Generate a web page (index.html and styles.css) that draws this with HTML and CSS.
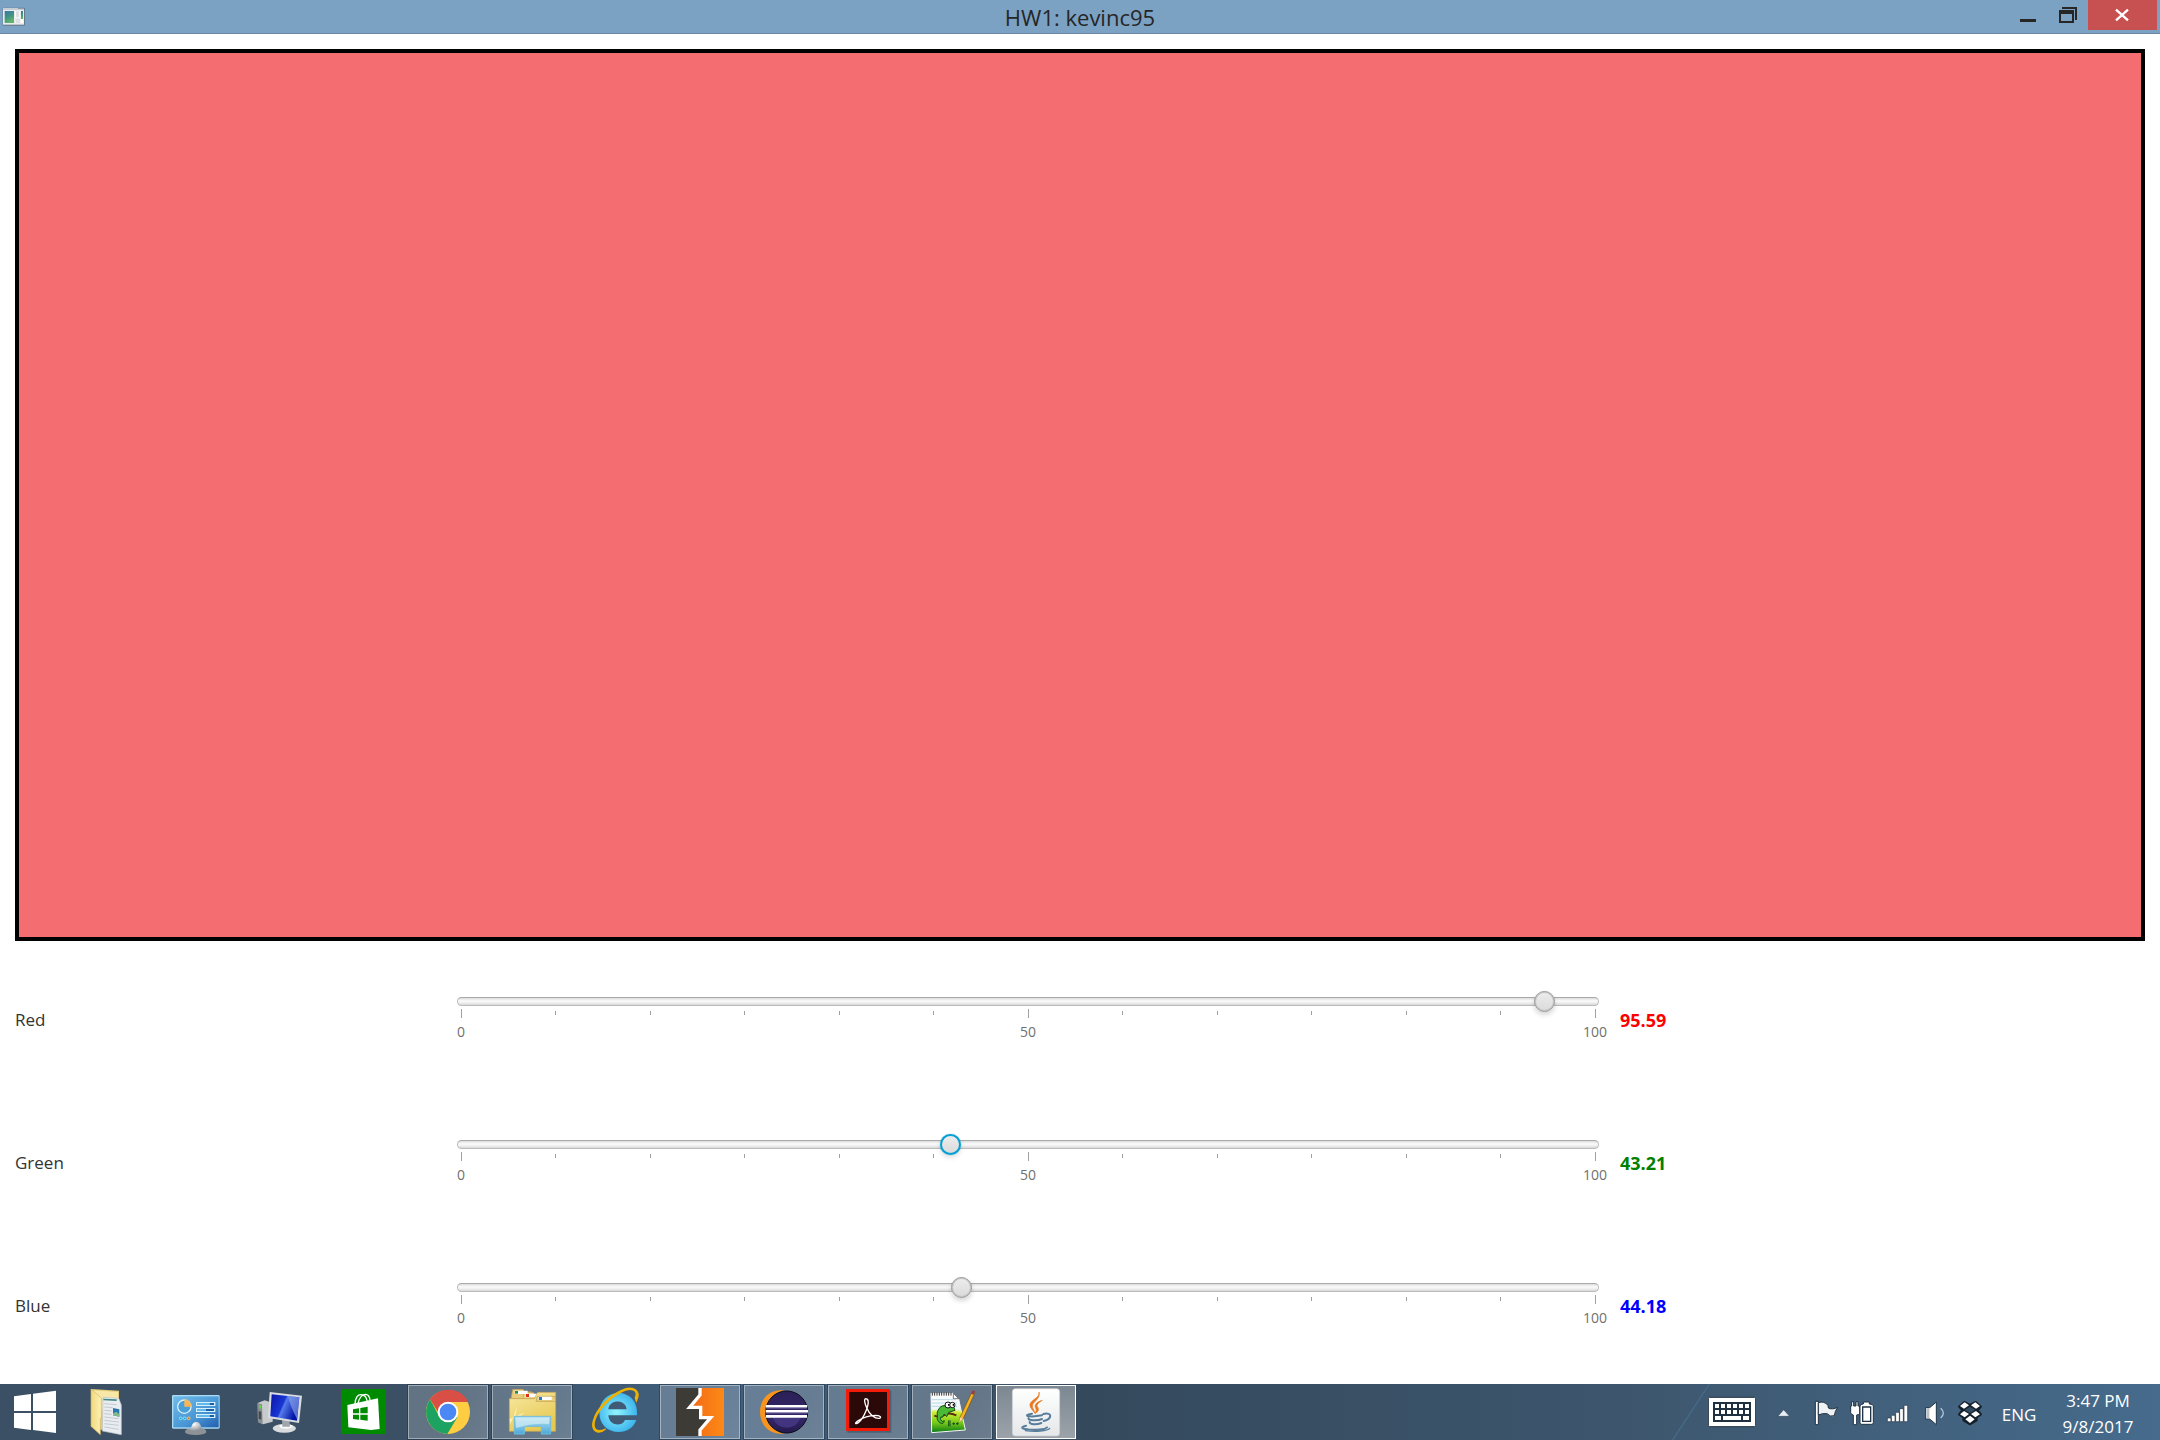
FILE: index.html
```html
<!DOCTYPE html>
<html lang="en">
<head>
<meta charset="utf-8">
<title>HW1: kevinc95</title>
<link rel="stylesheet" href="styles.css">
</head>
<body>
<header class="titlebar">
  <svg class="app-icon" viewBox="6 21 72 60" aria-hidden="true">
    <defs><linearGradient id="leaf" x1="0" y1="0" x2="0.4" y2="1"><stop offset="0" stop-color="#3f73a8"/><stop offset=".5" stop-color="#3f9285"/><stop offset="1" stop-color="#62b36b"/></linearGradient></defs>
    <rect x="8" y="23" width="67" height="54" rx="3" fill="#64788a"/>
    <rect x="9" y="24" width="63" height="50" fill="#e9ebec"/>
    <path d="M9 24h63v6H9z" fill="#c6ced5"/><path d="M54 24h18v3H54z" fill="#8c99a5"/>
    <path d="M14 33h28v36H14z" fill="url(#leaf)"/><path d="M63 33h6v24h-6z" fill="url(#leaf)"/>
    <path d="M45 33h15v21H45z" fill="#f8f8f8"/><path d="M48 57h11v12H48zM48 34h9v18h-9z" fill="#dedfe0"/><path d="M62 57h8v12h-8z" fill="#fff"/>
  </svg>
  <h1 class="title">HW1: kevinc95</h1>
  <div class="window-buttons">
    <button class="win-btn" type="button" aria-label="Minimize"><svg width="40" height="30" viewBox="87 0 120 90"><path d="M120 57h48v9h-48z" fill="#262626"/></svg></button>
    <button class="win-btn" type="button" aria-label="Restore"><svg width="39" height="30" viewBox="207 0 117 90"><path fill="#262626" fill-rule="evenodd" d="M237 30h45v39h-45zM243 42h33v21h-33zM246 21h45v39h-6V27h-39z"/></svg></button>
    <button class="win-btn win-close" type="button" aria-label="Close"><svg width="69" height="30" viewBox="324 0 207 90"><path d="M408 29l36 32M444 29l-36 32" stroke="#fff" stroke-width="7" fill="none"/></svg></button>
  </div>
</header>

<main class="content">
  <div class="swatch" role="img" aria-label="Mixed color"></div>
  <form class="channels">
    <div class="channel">
      <label class="name" for="red">Red</label>
      <div class="slider">
        <div class="rail"><input id="red" class="range" type="range" min="0" max="100" step="0.01" value="95.59"></div>
        <ul class="scale"><li class="major">0</li><li></li><li></li><li></li><li></li><li></li><li class="major">50</li><li></li><li></li><li></li><li></li><li></li><li class="major">100</li></ul>
      </div>
      <output class="value value-red" for="red">95.59</output>
    </div>
    <div class="channel">
      <label class="name" for="green">Green</label>
      <div class="slider">
        <div class="rail"><input id="green" class="range range-active" type="range" min="0" max="100" step="0.01" value="43.21"></div>
        <ul class="scale"><li class="major">0</li><li></li><li></li><li></li><li></li><li></li><li class="major">50</li><li></li><li></li><li></li><li></li><li></li><li class="major">100</li></ul>
      </div>
      <output class="value value-green" for="green">43.21</output>
    </div>
    <div class="channel">
      <label class="name" for="blue">Blue</label>
      <div class="slider">
        <div class="rail"><input id="blue" class="range" type="range" min="0" max="100" step="0.01" value="44.18"></div>
        <ul class="scale"><li class="major">0</li><li></li><li></li><li></li><li></li><li></li><li class="major">50</li><li></li><li></li><li></li><li></li><li></li><li class="major">100</li></ul>
      </div>
      <output class="value value-blue" for="blue">44.18</output>
    </div>
  </form>
</main>

<footer class="taskbar">
  <nav class="apps" aria-label="Applications">
    <button class="task start" type="button" aria-label="Start"><svg width="68" height="54" viewBox="0 27 204 162"><path fill="#fff" d="M42 61l51-7v51H42zM99 53l69-9v61H99zM42 111h51v51l-51-7zM99 111h69v60l-69-9z"/></svg></button>
    <button class="task" type="button" aria-label="Documents"><svg width="80" height="54" viewBox="216 27 240 162">
      <defs><linearGradient id="fold" x1="0" x2="1"><stop offset="0" stop-color="#f0d67c"/><stop offset="1" stop-color="#fff2b8"/></linearGradient></defs>
      <path d="M273 39l84 5v60l-50 58-34-10z" fill="#e4cb78"/><path d="M280 43l74 5v60h-46z" fill="#f8e8a8"/>
      <path d="M309 64l47 3 8 20v89l-57-11z" fill="#e9edf1" stroke="#b7bfc7" stroke-width="2"/>
      <path d="M310 68l40 2v5l-40-2z" fill="#3f8a83"/><path d="M313 83l37 3M313 93l25 2M313 103l22 2M313 113l22 2M313 123l43 5M313 133l43 5M313 143l43 5M313 153l43 7" stroke="#c3cad0" stroke-width="3"/>
      <path d="M339 96l19 4v22l-19-4z" fill="#2877b0"/><path d="M339 112l10-5 9 8v7l-19-4z" fill="#80b987"/>
      <path d="M273 39l31 27v57l-3 5v48l-28-25z" fill="url(#fold)" stroke="#d2b55d" stroke-width="2"/>
    </svg></button>
    <button class="task" type="button" aria-label="Control Panel"><svg width="80" height="54" viewBox="468 27 240 162">
      <defs><linearGradient id="panel" x1="0" x2="1" y2="1"><stop offset="0" stop-color="#72bce9"/><stop offset=".6" stop-color="#4795d5"/><stop offset="1" stop-color="#225fae"/></linearGradient><radialGradient id="silver" cx=".4" cy=".2"><stop offset="0" stop-color="#fff"/><stop offset="1" stop-color="#8d9297"/></radialGradient></defs>
      <rect x="516" y="57" width="143" height="101" rx="4" fill="#a8dcf5"/><rect x="520" y="61" width="136" height="93" fill="url(#panel)"/>
      <circle cx="553" cy="92" r="20" fill="#4a9fd8" stroke="#d6f0fc" stroke-width="4"/><path d="M553 92V70a22 22 0 0 1 22 22z" fill="#f9b659"/>
      <path d="M588 78h58v12h-58zM588 96h58v12h-58zM588 114h58v12h-58z" fill="#d6effc"/><path d="M591 81h38v6h-38zM591 99h27v6h-27zM591 117h38v6h-38z" fill="#63b8ea"/><path d="M629 81h13v6h-13zM618 99h24v6h-24zM629 117h13v6h-13z" fill="#1760a4"/>
      <circle cx="542" cy="127" r="4" fill="#2e98c9" stroke="#8cecf7" stroke-width="3"/><circle cx="554" cy="127" r="4" fill="#2e98c9" stroke="#8cecf7" stroke-width="3"/><circle cx="566" cy="127" r="4" fill="#bd7020" stroke="#ffcf75" stroke-width="3"/>
      <path d="M573 157q4-20 15-20 14 0 16 20 15 2 15 12-6 8-32 8t-32-8q0-11 18-12z" fill="url(#silver)"/>
    </svg></button>
    <button class="task" type="button" aria-label="Computer"><svg width="80" height="54" viewBox="720 27 240 162">
      <defs><linearGradient id="screen" x1="0" x2="1" y2=".4"><stop offset="0" stop-color="#0a13a4"/><stop offset=".5" stop-color="#1938d6"/><stop offset=".55" stop-color="#557be9"/><stop offset="1" stop-color="#0014a6"/></linearGradient></defs>
      <path d="M773 81l21-8 24 8v56l-29 8-15-7z" fill="#c8cbcd"/><path d="M773 81l13 4 2 60-14-7z" fill="#888e91"/><path d="M777 87l7 2v9l-7-2z" fill="#58dc3d"/><path d="M776 105l8 2v24l-8-3z" fill="#444c52"/>
      <ellipse cx="853" cy="157" rx="35" ry="13" fill="#d9dcde"/><ellipse cx="858" cy="151" rx="20" ry="7" fill="#fafafa"/><path d="M846 132h22l2 20h-23z" fill="#9fa5ab"/>
      <path d="M809 48l97 11-9 82-93-15z" fill="#d8dce0"/><path d="M815 55l83 9-7 70-80-13z" fill="url(#screen)"/><path d="M864 61l34 3-7 65q-21-40-27-68z" fill="#8aa4ec" opacity=".65"/>
    </svg></button>
    <button class="task" type="button" aria-label="Store"><svg width="80" height="54" viewBox="972 27 240 162">
      <path d="M1023 39h135v135h-135z" fill="#008a00"/><path d="M1042 87l92-20 5 92-26 3-68-8z" fill="#fff"/>
      <path d="M1065 84q2-28 18-28t19 22M1074 82q6-27 24-27 11 2 12 18" fill="none" stroke="#fff" stroke-width="4"/>
      <path fill="#008a00" d="M1059 100l18-3v15h-18zM1081 96l22-4v20h-22zM1059 116h18v15l-18-2zM1081 116h22v18l-22-3z"/>
    </svg></button>
    <button class="task open" type="button" aria-label="Google Chrome"><svg width="80" height="54" viewBox="24 27 240 162">
      <circle cx="144" cy="108" r="66" fill="#ffcd42"/><path d="M144 108L92 68A66 66 0 0 1 204 78h-60z" fill="#d94b40"/><path d="M90 70a66 66 0 0 0 52 104l30-50-54-2z" fill="#1ca261"/><path d="M90 70q18-24 54-28 43 0 60 36h-60l-28 34z" fill="#d94f45"/>
      <circle cx="144" cy="108" r="31" fill="#fff"/><circle cx="144" cy="108" r="25" fill="#4b88f5"/>
    </svg></button>
    <button class="task open" type="button" aria-label="File Explorer"><svg width="80" height="54" viewBox="276 27 240 162">
      <defs><linearGradient id="folder" x1="0" y1="0" x2=".5" y2="1"><stop offset="0" stop-color="#f8e9a3"/><stop offset="1" stop-color="#e7c852"/></linearGradient><linearGradient id="stand" y2="1" x2="0"><stop offset="0" stop-color="#bde3f3"/><stop offset="1" stop-color="#4ba9d9"/></linearGradient></defs>
      <path d="M333 68l5-28h31l4 7h21l4 10v12z" fill="#e7cb78" stroke="#b99a50" stroke-width="2"/><path d="M369 68l3-18h29l4 7h27v12z" fill="#edd68a" stroke="#b99a50" stroke-width="2"/>
      <path d="M344 44h39v10h-39zM377 53h39v10h-39z" fill="#fff"/><path d="M345 45h9v8h-9z" fill="#188f44"/><path d="M378 54h9v9h-9z" fill="#dc301c"/>
      <path d="M328 68h76l5-12 4-7h54v117H328z" fill="url(#folder)" stroke="#c5a350" stroke-width="2"/><path d="M408 76l4-15h52l3 15z" fill="#ead17c" stroke="#b99a50" stroke-width="2"/><path d="M416 62h39v10h-39z" fill="#fff"/><path d="M417 63h9v9h-9z" fill="#267bc4"/>
      <path d="M329 129l45-20-30 27 8-48-15 43-7 14z" fill="#fff9d0" opacity=".7"/>
      <path d="M343 121h109v53h-28v-23h-51v23h-30z" fill="url(#stand)" stroke="#6ebbdc" stroke-width="3"/><path d="M348 126h99v18q-45-4-99 12z" fill="#d7eff7" opacity=".65"/>
    </svg></button>
    <button class="task" type="button" aria-label="Internet Explorer"><svg width="80" height="54" viewBox="528 27 240 162">
      <defs><radialGradient id="ie" cx=".45" cy=".5" r=".6"><stop offset="0" stop-color="#8ff4ff"/><stop offset="1" stop-color="#35aeea"/></radialGradient><linearGradient id="gold" x2="1"><stop offset="0" stop-color="#eeb100"/><stop offset=".5" stop-color="#ffed75"/><stop offset="1" stop-color="#eeae00"/></linearGradient></defs>
      <path fill="url(#ie)" fill-rule="evenodd" d="M711 118h-86c2 33 42 35 50 14h34c-8 24-29 36-53 36-34 0-58-24-58-57 0-36 25-60 57-60s59 23 56 67zM625 100h55c-3-31-52-31-55 0z"/>
      <path d="M706 66c12-27-15-33-46-16-41 22-71 60-77 87-5 24 8 34 34 22-24 20-45 4-37-24 9-34 45-75 85-92 34-15 61 0 44 32z" fill="url(#gold)" stroke="#eeb100" stroke-width="4"/>
    </svg></button>
    <button class="task open" type="button" aria-label="Burp Suite"><svg width="80" height="54" viewBox="780 27 240 162">
      <defs><linearGradient id="burp" x2="1"><stop offset="0" stop-color="#f04a12"/><stop offset=".5" stop-color="#f67316"/><stop offset="1" stop-color="#fd8916"/></linearGradient></defs>
      <path d="M828 36h144v144H828z" fill="url(#burp)"/><path d="M828 36h72v21l-31 37h33v31h30l-32 37v18h-72z" fill="#3d3b36"/>
      <path d="M900 36v21l-31 37h33v31h30l-32 37v18" fill="none" stroke="#fff" stroke-width="10"/>
    </svg></button>
    <button class="task open" type="button" aria-label="Eclipse"><svg width="80" height="54" viewBox="12 27 240 162">
      <defs><linearGradient id="ecl" x2="0" y2="1"><stop offset="0" stop-color="#2b2055"/><stop offset=".6" stop-color="#34266b"/><stop offset="1" stop-color="#251b4d"/></linearGradient></defs>
      <path d="M132 43c-96-10-96 140 0 130-68-20-66-112 0-130z" fill="#f7941e"/><circle cx="140" cy="108" r="63" fill="url(#ecl)" stroke="#0d0b18" stroke-width="3"/><path d="M98 126h84q-12 29-42 29t-42-29z" fill="#43347f"/>
      <path d="M78 87h123v7H78zM77 102h127v7H77zM78 117h123v8H78z" fill="#fff"/><path d="M78 94h123v3H78zM77 109h127v3H77z" fill="#aaa2c6"/>
    </svg></button>
    <button class="task open" type="button" aria-label="Adobe Acrobat"><svg width="80" height="54" viewBox="264 27 240 162">
      <path d="M322 44h132v126H322z" fill="#344657" opacity=".5"/><path d="M318 39h132v126H318z" fill="#f51b09"/><path d="M327 48h114v108H327z" fill="#2b0908"/>
      <path d="M380 69c-10-5-6 14 0 26 9 22 25 34 39 32 6-3 2-9-13-9-21 1-39 8-51 16-12 8-10 12 0 6 16-12 40-66 25-71z" fill="none" stroke="#fff" stroke-width="4"/>
    </svg></button>
    <button class="task open" type="button" aria-label="Notepad++"><svg width="80" height="54" viewBox="516 27 240 162">
      <defs><linearGradient id="note" x2="0" y2="1"><stop offset="0" stop-color="#fff"/><stop offset=".4" stop-color="#edf6f9"/><stop offset=".48" stop-color="#d2ed35"/><stop offset=".75" stop-color="#75c918"/><stop offset="1" stop-color="#087a17"/></linearGradient></defs>
      <path d="M573 52h67l16 17 20 93-101 8z" fill="url(#note)" stroke="#f5f5f5" stroke-width="3"/><path d="M640 52v16h16z" fill="#fff" stroke="#333" stroke-width="2"/>
      <path d="M577 49v10M584 49v10M591 49v10M598 49v10M605 49v10M612 49v10M619 49v10M626 49v10M633 49v10" stroke="#333" stroke-width="3"/><path d="M576 71h73M576 81h75M576 91h75" stroke="#9cc7dc" stroke-width="2"/>
      <path d="M583 119q17 7 30-2t36 1" fill="none" stroke="#5a2b17" stroke-width="6"/><path d="M594 103q10-21 31-11l14-5 6 16-19 6-6 13-7-8-6 10q-7-4-5 7 4 10 11 3-2 12-12 7-12-7-9-21-2-10 2-17z" fill="#49b936" stroke="#164c16" stroke-width="3"/>
      <circle cx="624" cy="87" r="9" fill="#fff" stroke="#111" stroke-width="3"/><circle cx="637" cy="87" r="8" fill="#fff" stroke="#111" stroke-width="3"/><path d="M624 84h4v5h-4zM638 84h4v5h-4z"/>
      <path d="M626 133v18M630 133v18M637 143h8M641 139v8M648 143h8M652 139v8" stroke="#174c1d" stroke-width="3"/>
      <path d="M657 141l3-17 36-76 8 4-35 77z" fill="#f7b522" stroke="#7b4c14" stroke-width="2"/><path d="M657 141l3-17 9 5z" fill="#f6d6a4"/><path d="M693 53l5-10 7 3-4 10z" fill="#9d3a42"/>
    </svg></button>
    <button class="task open current" type="button" aria-label="Java"><svg width="80" height="54" viewBox="768 27 240 162">
      <defs><linearGradient id="tile" x2="0" y2="1"><stop offset="0" stop-color="#fff"/><stop offset="1" stop-color="#e5e7e9"/></linearGradient></defs>
      <rect x="817" y="38" width="142" height="142" rx="9" fill="url(#tile)" stroke="#c8ccd0" stroke-width="2"/>
      <path d="M897 48c5 18-30 25-27 41 1 8 10 15 14 22-1-11-7-13-7-21 0-12 26-22 20-42zM907 73c-15 4-24 12-21 21 4 8 4 9-1 19 14-9 11-15 7-21-3-6 5-13 15-19z" fill="#e9781e" stroke="#e9781e" stroke-width="2"/>
      <g fill="none" stroke="#577d9b" stroke-linecap="round"><path d="M876 113c-33 6-6 12 30 5M910 114c29-7 26 15 1 21" stroke-width="6"/><path d="M866 126c-5 9 29 8 40 3M869 138c-1 9 23 8 35 3" stroke-width="6"/><path d="M858 149c-43 11 49 19 63 5" stroke-width="6"/><path d="M856 164c30 4 67 1 73-7" stroke-width="4"/></g>
    </svg></button>
  </nav>

  <div class="tray">
    <svg class="streak" width="40" height="56" viewBox="90 24 120 168" aria-hidden="true"><path d="M208 24L98 192" stroke="#446884" stroke-width="5"/></svg>
    <button class="tray-btn keyboard" type="button" aria-label="Touch keyboard"><svg width="48" height="54" viewBox="204 27 144 162">
      <rect x="205" y="64" width="142" height="88" rx="4" fill="#fff" stroke="#1f3040" stroke-width="3"/>
      <path d="M219 78h114v60H219z" fill="#1f3040"/><path fill="#fff" d="M225 84h12v12h-12zM243 84h12v12h-12zM261 84h12v12h-12zM279 84h12v12h-12zM297 84h12v12h-12zM315 84h12v12h-12zM225 102h12v12h-12zM243 102h12v12h-12zM261 102h12v12h-12zM279 102h12v12h-12zM297 102h12v12h-12zM315 102h12v12h-12zM225 120h18v12h-18zM249 120h54v12h-54zM309 120h18v12h-18z"/>
    </svg></button>
    <button class="tray-btn" type="button" aria-label="Show hidden icons"><svg width="36" height="54" viewBox="399 27 108 162"><path d="M413 121l18-20 18 20z" fill="#e8eef6" stroke="#31475b" stroke-width="2"/></svg></button>
    <button class="tray-btn" type="button" aria-label="Action Center"><svg width="36" height="54" viewBox="507 27 108 162"><g stroke="#203344" stroke-width="3"><path d="M526 76h9v70h-9z" fill="#fff"/><path d="M535 80q17-6 29 8l1 8q11 6 28-2-9 12-10 25-12 5-22-6-14-2-26 4z" fill="#f0f1f3"/></g></svg></button>
    <button class="tray-btn" type="button" aria-label="Battery"><svg width="36" height="54" viewBox="615 27 108 162"><g stroke="#203344" stroke-width="3"><path d="M635 77h6v13h7V77h6v13h5v22q-3 5-9 5v29h-10v-29q-7-1-8-7V90h3z" fill="#fff"/><path d="M670 84v-6h18v6q12 0 12 6v50q0 5-5 5h-30q-5 0-5-5V90q0-6 10-6z" fill="#fff"/><path d="M668 93h24v43h-24z" fill="#fff" stroke-width="4"/></g></svg></button>
    <button class="tray-btn" type="button" aria-label="Network"><svg width="36" height="54" viewBox="723 27 108 162"><path d="M742 126h11v11h-11zM754 118h11v19h-11zM767 109h11v28h-11zM779 98h11v39h-11zM792 88h11v49h-11z" fill="#fff" stroke="#203344" stroke-width="2"/></svg></button>
    <button class="tray-btn" type="button" aria-label="Volume"><svg width="36" height="54" viewBox="831 27 108 162"><path d="M857 95h12l20-17v68l-20-17h-12z" fill="#fff" stroke="#203344" stroke-width="3"/><path d="M860 97h8v30h-8z" fill="#b9bfc5"/><path d="M902 97q16 14 0 29" fill="none" stroke="#b5c8d9" stroke-width="4"/></svg></button>
    <button class="tray-btn" type="button" aria-label="Dropbox"><svg width="36" height="54" viewBox="939 27 108 162"><path d="M973 78l17 9 17-9 16 14-10 11 10 12-13 9v9l-20 12-20-12v-9l-13-9 10-12-10-11z" fill="#14202c" stroke="#14202c" stroke-width="6" stroke-linejoin="round"/><path fill="#fff" d="M974 79l13 9-15 10-12-8zM1006 79l14 11-12 8-15-10zM972 105l15 9-13 10-14-9zM1008 105l12 10-14 9-13-10zM990 119l14 11-14 11-14-11z"/><path d="M990 92l16 10-16 10-16-10z" fill="#324a60"/></svg></button>
    <button class="tray-btn lang" type="button">ENG</button>
    <time class="clock" datetime="2017-09-08T15:47"><span>3:47 PM</span><span>9/8/2017</span></time>
  </div>
</footer>
</body>
</html>
```
FILE: styles.css
```css
* { box-sizing: border-box; }

body {
  margin: 0;
  min-height: 100vh;
  display: flex;
  flex-direction: column;
  background: #fff;
  color: #333;
  font-family: "Open Sans", "Noto Sans", sans-serif;
  font-size: 17px;
}

button {
  margin: 0;
  padding: 0;
  border: 0;
  background: none;
  color: inherit;
  font: inherit;
}

svg { display: block; }

/* Window title bar */
.titlebar {
  display: grid;
  grid-template-columns: 1fr auto 1fr;
  height: 34px;
  background: #7ba2c3;
  border-bottom: 1px solid #6b86a5;
}

.app-icon {
  width: 24px;
  height: 20px;
  margin: 7px 0 0 2px;
}

.title {
  margin: 0;
  color: #262626;
  font-size: 22px;
  font-weight: 400;
  line-height: 34px;
}

.window-buttons {
  display: flex;
  justify-content: flex-end;
  align-items: flex-start;
  padding-right: 3px;
}

.win-close { background: #c75050; }

/* Color preview and sliders */
.content {
  flex: 1;
  display: flex;
  flex-direction: column;
  padding: 15px 15px 7px;
}

.swatch {
  flex: 1;
  min-height: 200px;
  border: 4px solid #000;
  background: #f46e71;
}

.channels { margin-top: 7px; }

.channel {
  display: grid;
  grid-template-columns: 421fr 1142fr 525fr;
  column-gap: 21px;
  align-items: center;
  height: 143px;
}

.rail {
  height: 9px;
  border: 1px solid #bbb;
  border-top-color: #aaa;
  border-radius: 5px;
  background: linear-gradient(#dcdcdc, #fafafa 40%, #f4f4f4 60%, #d8d8d8);
  display: flex;
  align-items: center;
}

.range {
  flex: 1;
  min-width: 0;
  height: 21px;
  margin: 0 -7px 0 -8px;
  appearance: none;
  background: none;
}

.range::-webkit-slider-thumb {
  appearance: none;
  width: 21px;
  height: 21px;
  border: 1px solid #959595;
  border-radius: 50%;
  background: linear-gradient(#ededed, #dadada);
  box-shadow: inset 0 0 0 1px #c4c4c4, 0 3px 5px rgba(0, 0, 0, 0.16);
}

.range-active::-webkit-slider-thumb {
  border: 2px solid #039ed3;
  box-shadow: 0 0 1px #039ed3, 0 3px 5px rgba(0, 0, 0, 0.12);
}

.scale {
  display: flex;
  justify-content: space-between;
  height: 34px;
  margin: 3px -11px 0;
  padding: 0;
  list-style: none;
  color: #707070;
  font-size: 14px;
  line-height: 28px;
}

.scale li {
  width: 30px;
  text-align: center;
}

.scale li::before {
  content: "";
  display: block;
  width: 1px;
  height: 4px;
  margin: 2px auto 4px;
  background: #a0a0a0;
}

.scale .major::before {
  height: 9px;
  margin: 0 auto;
}

.value {
  font-size: 18px;
  font-weight: 700;
}

.value-red { color: #f00; }
.value-green { color: #008000; }
.value-blue { color: #00f; }

/* Taskbar */
.taskbar {
  display: flex;
  justify-content: space-between;
  height: 56px;
  color: #fff;
  background: linear-gradient(90deg, #3b5064 0%, #3b5064 20%, #41607f 33%, #3d5369 46%, #34495c 50%, #3d566d 75%, #466b8c 100%);
}

.apps {
  display: flex;
  gap: 4px;
  padding: 1px 0;
}

.open {
  background: linear-gradient(125deg, rgba(255, 255, 255, 0.2) 60%, rgba(255, 255, 255, 0.24));
  box-shadow: inset 0 0 0 1px rgba(255, 255, 255, 0.4), 0 0 0 1px rgba(20, 36, 50, 0.35);
}

.current {
  background: linear-gradient(#7b8791, #9ca3aa);
  box-shadow: inset 0 0 0 1px #fff;
}

.tray {
  display: flex;
  align-items: center;
  padding-right: 13px;
}

.streak { margin-right: -2px; }

.keyboard { margin-right: 17px; }

.lang {
  width: 60px;
  padding-top: 4px;
}

.clock {
  display: flex;
  flex-direction: column;
  width: 98px;
  line-height: 26px;
  text-align: center;
  padding-top: 4px;
}
```
